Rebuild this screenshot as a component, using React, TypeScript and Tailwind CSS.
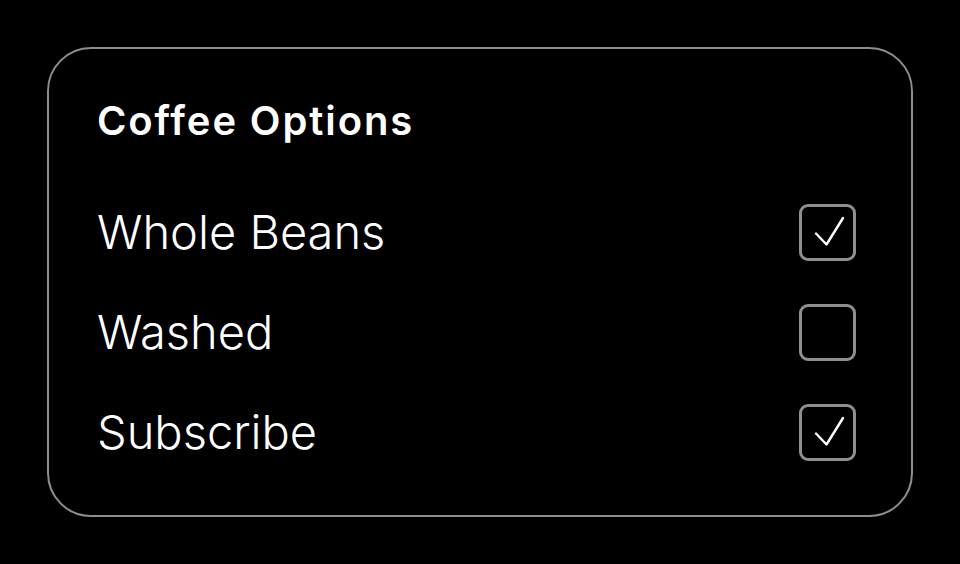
const options = [
  { label: 'Whole Beans', checked: true },
  { label: 'Washed', checked: false },
  { label: 'Subscribe', checked: true },
];

function CheckBox({ checked }: { checked: boolean }) {
  return (
    <div className="flex h-[57px] w-[57px] items-center justify-center rounded-[9px] border-[3px] border-[#8e8e93]">
      {checked && (
        <svg width="34" height="34" viewBox="0 0 34 34" fill="none">
          <path
            d="M5 18.5 L15.5 29.5 L32 3"
            stroke="white"
            strokeWidth="2.4"
            strokeLinecap="round"
            strokeLinejoin="round"
          />
        </svg>
      )}
    </div>
  );
}

export default function App() {
  return (
    <div
      className="min-h-screen w-full bg-black pl-[47px] pt-[47px]"
      style={{ fontFamily: 'Inter, "Noto Sans", sans-serif' }}
    >
      <div className="flex h-[470px] w-[866px] flex-col rounded-[44px] border-2 border-[#8e8e8e] pl-[48px] pr-[55px] pt-[50px]">
        <h2 className="h-[44px] text-[40px] leading-[44px] font-semibold tracking-[0.047em] text-white">
          Coffee Options
        </h2>
        <div className="mt-[39px] flex flex-col">
          {options.map((opt) => (
            <div key={opt.label} className="flex h-[100px] items-center justify-between">
              <span className="text-[47px] leading-[58px] font-light text-white">{opt.label}</span>
              <CheckBox checked={opt.checked} />
            </div>
          ))}
        </div>
      </div>
    </div>
  );
}
